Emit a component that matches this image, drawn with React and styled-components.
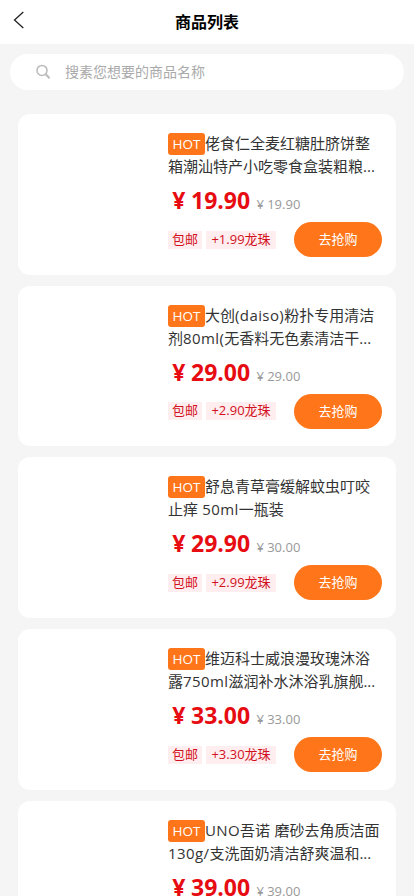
import React, { useState } from 'react';
import styled, { createGlobalStyle } from 'styled-components';

const goodsList = [
  {
    id: 1,
    name: '佬食仁全麦红糖肚脐饼整箱潮汕特产小吃零食盒装粗粮...',
    price: '19.90',
    origin: '19.90',
    bead: '1.99',
  },
  {
    id: 2,
    name: '大创(daiso)粉扑专用清洁剂80ml(无香料无色素清洁干...',
    price: '29.00',
    origin: '29.00',
    bead: '2.90',
  },
  {
    id: 3,
    name: '舒息青草膏缓解蚊虫叮咬止痒 50ml一瓶装',
    price: '29.90',
    origin: '30.00',
    bead: '2.99',
  },
  {
    id: 4,
    name: '维迈科士威浪漫玫瑰沐浴露750ml滋润补水沐浴乳旗舰...',
    price: '33.00',
    origin: '33.00',
    bead: '3.30',
  },
  {
    id: 5,
    name: 'UNO吾诺 磨砂去角质洁面130g/支洗面奶清洁舒爽温和...',
    price: '39.00',
    origin: '39.00',
    bead: '3.90',
  },
];

// 英文和数字部分单独加字间距
const splitName = name => name.split(/([A-Za-z0-9()/ ]+)/).filter(Boolean);

function GoodsCard({ name, price, origin, bead }) {
  return (
    <S.Card>
      <S.Thumb />
      <S.Info>
        <S.Name>
          <S.Hot>HOT</S.Hot>
          {splitName(name).map((part, i) =>
            /^[A-Za-z0-9()/ ]/.test(part) ? (
              <S.Latin key={i}>{part}</S.Latin>
            ) : (
              part
            )
          )}
        </S.Name>
        <S.PriceRow>
          <S.Price>
            <S.Yen>¥</S.Yen>
            {price}
          </S.Price>
          <S.Origin>
            <S.Yen>¥</S.Yen>
            {origin}
          </S.Origin>
        </S.PriceRow>
        <S.BottomRow>
          <S.Tag>包邮</S.Tag>
          <S.Tag $wide>+{bead}龙珠</S.Tag>
          <S.BuyButton type="button">去抢购</S.BuyButton>
        </S.BottomRow>
      </S.Info>
    </S.Card>
  );
}

export default function App() {
  const [keyword, setKeyword] = useState('');

  return (
    <S.Page>
      <GlobalStyle />
      <S.Header>
        <S.BackButton type="button" aria-label="返回">
          <svg width="12" height="18" viewBox="0 0 12 18" fill="none">
            <path d="M10.3 1L1.5 9L10.3 17" stroke="#222" strokeWidth="1.3" />
          </svg>
        </S.BackButton>
        <S.Title>商品列表</S.Title>
      </S.Header>
      <S.SearchBar>
        <svg width="16" height="16" viewBox="0 0 16 16" fill="none">
          <circle cx="6" cy="6.4" r="5" stroke="#bbb" strokeWidth="1.5" />
          <path d="M9.7 10.2L13.6 14.2" stroke="#bbb" strokeWidth="2" />
        </svg>
        <S.SearchInput
          value={keyword}
          placeholder="搜素您想要的商品名称"
          onChange={e => setKeyword(e.target.value)}
        />
      </S.SearchBar>
      <S.List>
        {goodsList.map(goods => (
          <GoodsCard key={goods.id} {...goods} />
        ))}
      </S.List>
    </S.Page>
  );
}

const GlobalStyle = createGlobalStyle`
  * {
    box-sizing: border-box;
  }

  body {
    margin: 0;
    background: #f5f5f6;
    font-family: 'Open Sans', 'Noto Sans CJK SC', sans-serif;
  }

  button,
  input {
    padding: 0;
    border: 0;
    background: none;
    font-family: inherit;
  }
`;

const S = {
  Page: styled.div`
    height: 100vh;
    overflow: hidden;
    background: #f5f5f6;
  `,
  Header: styled.header`
    display: grid;
    grid-template-columns: 60px 1fr 60px;
    align-items: center;
    height: 44px;
    background: #fff;
  `,
  BackButton: styled.button`
    display: flex;
    padding: 0 0 4px 13px;
  `,
  Title: styled.h1`
    margin: 0;
    font-size: 16px;
    font-weight: 700;
    line-height: 44px;
    text-align: center;
    color: #000;
  `,
  SearchBar: styled.label`
    display: flex;
    align-items: center;
    gap: 13px;
    height: 36px;
    margin: 10px 10px 0;
    padding: 0 26px;
    border-radius: 18px;
    background: #fff;
  `,
  SearchInput: styled.input`
    flex: 1;
    height: 34px;
    margin-bottom: 2px;
    font-size: 14px;
    color: #333;
    outline: none;

    &::placeholder {
      color: #aaa;
    }
  `,
  List: styled.main`
    display: flex;
    flex-direction: column;
    gap: 11px;
    padding: 24px 18px 0;
  `,
  Card: styled.section`
    display: flex;
    flex-shrink: 0;
    height: 160.7px;
    padding: 18px 14px 0 0;
    border-radius: 12px;
    background: #fff;
  `,
  Thumb: styled.div`
    flex: 0 0 150px;
    height: 125px;
  `,
  Info: styled.div`
    flex: 1;
    min-width: 0;
  `,
  Name: styled.div`
    height: 46px;
    font-size: 15px;
    line-height: 23px;
    color: #333;
  `,
  Latin: styled.span`
    letter-spacing: 0.4px;
  `,
  Hot: styled.span`
    display: inline-block;
    width: 37px;
    height: 22px;
    margin-top: 1px;
    border-radius: 3px;
    background: #ff7519;
    font-size: 13.5px;
    line-height: 22px;
    text-align: center;
    vertical-align: top;
    color: #fff;
  `,
  PriceRow: styled.div`
    display: flex;
    align-items: baseline;
    gap: 4px;
    height: 44px;
    line-height: 44px;
  `,
  Yen: styled.span`
    display: inline-block;
    width: 1em;
    padding-left: 0.18em;
  `,
  Price: styled.span`
    font-size: 23px;
    font-weight: 700;
    color: #e60c12;
  `,
  Origin: styled.span`
    font-size: 13px;
    color: #999;
  `,
  BottomRow: styled.div`
    display: flex;
    align-items: center;
    gap: 4px;
    height: 35px;
  `,
  Tag: styled.span`
    width: ${({ $wide }) => ($wide ? '70px' : '34px')};
    height: 18px;
    background: #ffeeef;
    font-size: 13px;
    line-height: 16px;
    text-align: center;
    white-space: nowrap;
    color: #d2101e;
  `,
  BuyButton: styled.button`
    width: 88px;
    height: 35px;
    margin-left: auto;
    border-radius: 18px;
    background: #ff7519;
    font-size: 13px;
    line-height: 35px;
    color: #fff;
  `,
};
